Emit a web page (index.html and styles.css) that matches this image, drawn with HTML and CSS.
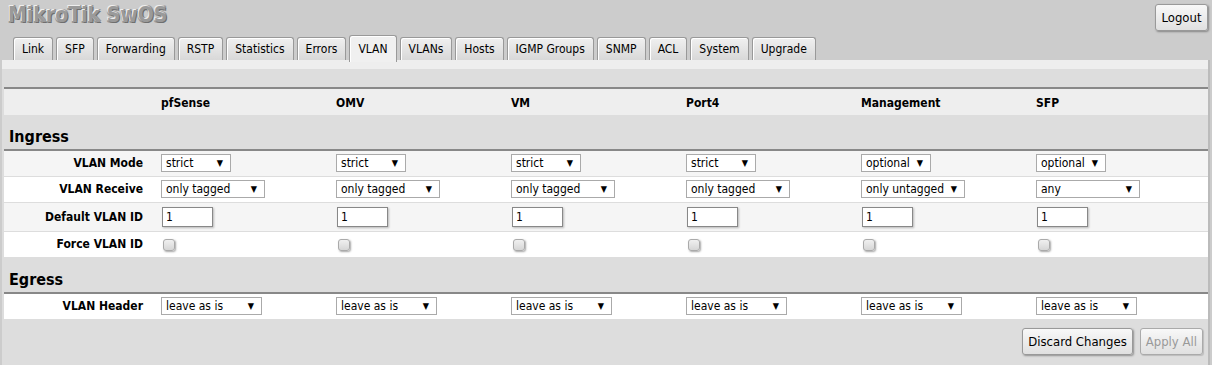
FILE: index.html
```html
<!DOCTYPE html>
<html>
<head>
<meta charset="utf-8">
<title>MikroTik SwOS</title>
<link rel="stylesheet" href="styles.css">
</head>
<body>
<header class="top">
  <h1 class="logo">MikroTik SwOS</h1>
  <button class="btn logout">Logout</button>
</header>
<nav class="tabs">
  <a class="tab">Link</a><a class="tab">SFP</a><a class="tab">Forwarding</a><a class="tab">RSTP</a><a class="tab">Statistics</a><a class="tab">Errors</a><a class="tab active">VLAN</a><a class="tab">VLANs</a><a class="tab">Hosts</a><a class="tab">IGMP Groups</a><a class="tab">SNMP</a><a class="tab">ACL</a><a class="tab">System</a><a class="tab">Upgrade</a>
</nav>
<main class="panel">
  <div class="strip"></div>
  <table class="grid">
    <colgroup><col class="c-label"><col class="c-port"><col class="c-port"><col class="c-port"><col class="c-port"><col class="c-port"><col></colgroup>
    <tr class="spacer"><td colspan="7"></td></tr>
    <tr class="head"><th></th><th>pfSense</th><th>OMV</th><th>VM</th><th>Port4</th><th>Management</th><th>SFP</th></tr>
    <tr class="section"><td colspan="7">Ingress</td></tr>
    <tr class="row alt">
      <th>VLAN Mode</th>
      <td><span class="sel w70"><select><option>strict</option></select></span></td>
      <td><span class="sel w70"><select><option>strict</option></select></span></td>
      <td><span class="sel w70"><select><option>strict</option></select></span></td>
      <td><span class="sel w70"><select><option>strict</option></select></span></td>
      <td><span class="sel w70"><select><option>optional</option></select></span></td>
      <td><span class="sel w70"><select><option>optional</option></select></span></td>
    </tr>
    <tr class="row">
      <th>VLAN Receive</th>
      <td><span class="sel w104"><select><option>only tagged</option></select></span></td>
      <td><span class="sel w104"><select><option>only tagged</option></select></span></td>
      <td><span class="sel w104"><select><option>only tagged</option></select></span></td>
      <td><span class="sel w104"><select><option>only tagged</option></select></span></td>
      <td><span class="sel w104"><select><option>only untagged</option></select></span></td>
      <td><span class="sel w104"><select><option>any</option></select></span></td>
    </tr>
    <tr class="row alt tall">
      <th>Default VLAN ID</th>
      <td><input class="num" type="text" value="1"></td>
      <td><input class="num" type="text" value="1"></td>
      <td><input class="num" type="text" value="1"></td>
      <td><input class="num" type="text" value="1"></td>
      <td><input class="num" type="text" value="1"></td>
      <td><input class="num" type="text" value="1"></td>
    </tr>
    <tr class="row">
      <th>Force VLAN ID</th>
      <td><span class="chk"></span></td>
      <td><span class="chk"></span></td>
      <td><span class="chk"></span></td>
      <td><span class="chk"></span></td>
      <td><span class="chk"></span></td>
      <td><span class="chk"></span></td>
    </tr>
    <tr class="section egress"><td colspan="7">Egress</td></tr>
    <tr class="row">
      <th>VLAN Header</th>
      <td><span class="sel w101"><select><option>leave as is</option></select></span></td>
      <td><span class="sel w101"><select><option>leave as is</option></select></span></td>
      <td><span class="sel w101"><select><option>leave as is</option></select></span></td>
      <td><span class="sel w101"><select><option>leave as is</option></select></span></td>
      <td><span class="sel w101"><select><option>leave as is</option></select></span></td>
      <td><span class="sel w101"><select><option>leave as is</option></select></span></td>
    </tr>
  </table>
  <div class="actions">
    <button class="btn">Discard Changes</button>
    <button class="btn disabled">Apply All</button>
  </div>
</main>
</body>
</html>
```
FILE: styles.css
```css
* { box-sizing: border-box; }
html, body { margin: 0; padding: 0; }
body {
  background: #cccccc;
  font-family: "DejaVu Sans Condensed", "DejaVu Sans", sans-serif;
  font-size: 12px;
  color: #000;
  width: 1212px;
  height: 365px;
  overflow: hidden;
}
.top {
  display: flex;
  justify-content: space-between;
  align-items: flex-start;
  padding: 3px 4px 0 8px;
  height: 35px;
}
.logo {
  margin: 0;
  font-size: 21px;
  font-weight: bold;
  color: #9a9a9a;
  letter-spacing: 0;
  line-height: 24px;
  text-shadow: -1px -1px 0 #eee, 1px 1px 0 #6f6f6f, 1px -1px 0 #999, -1px 1px 0 #999;
}
.btn {
  font-family: inherit;
  font-size: 13px;
  color: #000;
  background: linear-gradient(#f8f8f8, #e0e0e0);
  border: 1px solid #999;
  border-radius: 3px;
  box-shadow: 1px 1px 2px rgba(0,0,0,0.35);
  padding: 0 5px;
  height: 27px;
}
.logout { margin-top: 1px; width: 53px; }
.btn.disabled { color: #999; border-color: #aaa; box-shadow: 1px 1px 1px rgba(0,0,0,0.15); }

.tabs {
  display: flex;
  align-items: flex-end;
  gap: 3px;
  padding-left: 13px;
  height: 25px;
}
.tab {
  display: block;
  height: 23px;
  line-height: 22px;
  padding: 0 8px;
  border: 1px solid #999;
  border-bottom: none;
  border-radius: 3px 3px 0 0;
  background: linear-gradient(#f0f0f0, #d8d8d8);
  font-size: 12px;
  color: #000;
  box-shadow: inset 1px 1px 0 #fff;
}
.tab.active {
  height: 27px;
  line-height: 27px;
  background: #f0f0f0;
  margin-bottom: -2px;
  position: relative;
}
.panel {
  margin: 0 2px;
  background: #dddddd;
  border-right: 2px solid #bbb;
  height: 305px;
}
.strip { height: 9px; background: #eeeeee; }

.grid {
  width: 1204px;
  margin-left: 2px;
  border-collapse: collapse;
  table-layout: fixed;
}
.c-label { width: 157px; }
.c-port { width: 175px; }
.grid td, .grid th { padding: 0; }
.spacer td { height: 19px; }
.head th {
  height: 27px;
  background: #eeeeee;
  border-top: 2px solid #888;
  text-align: left;
  font-weight: bold;
  font-size: 12px;
  padding-top: 1px;
}
.section td {
  height: 35px;
  font-size: 16px;
  font-weight: bold;
  padding: 9px 0 0 5px;
  border-bottom: 2px solid #888;
}
.section.egress td { height: 36px; padding-top: 10px; }
.row th, .row td { background: #fff; border-bottom: 1px solid #ddd; height: 26px; vertical-align: middle; }
.row.alt th, .row.alt td { background: #f5f5f5; }
.row.tall th, .row.tall td { height: 29px; }
.row th { text-align: right; padding-right: 18px; font-weight: bold; font-size: 12px; }

.sel { display: inline-block; position: relative; vertical-align: middle; }
.sel select {
  -webkit-appearance: none;
  appearance: none;
  font-family: inherit;
  font-size: 12px;
  color: #000;
  height: 18px;
  line-height: 16px;
  padding: 0 0 0 4px;
  border: 1px solid #aaa;
  border-radius: 0;
  background: #fff;
  width: 100%;
  display: block;
}
.sel::after {
  content: "▼";
  position: absolute;
  right: 8px;
  top: 2px;
  font-size: 9px;
  line-height: 14px;
  pointer-events: none;
}
.w70 { width: 70px; }
.w104 { width: 104px; }
.w101 { width: 101px; }

.num {
  font-family: inherit;
  font-size: 12px;
  width: 51px;
  height: 20px;
  border: 1px solid #888;
  padding: 0 3px;
  margin-left: 1px;
  box-shadow: 1px 1px 2px rgba(0,0,0,0.25);
  vertical-align: middle;
}
.chk {
  display: inline-block;
  width: 12px;
  height: 12px;
  margin-left: 2px;
  border: 1px solid #aaa;
  border-radius: 3px;
  background: linear-gradient(#f0f0f0, #d6d6d6);
  box-shadow: 1px 1px 2px rgba(0,0,0,0.35);
  vertical-align: middle;
}
.actions {
  display: flex;
  justify-content: flex-end;
  gap: 7px;
  padding: 8px 5px 0 0;
}
```
